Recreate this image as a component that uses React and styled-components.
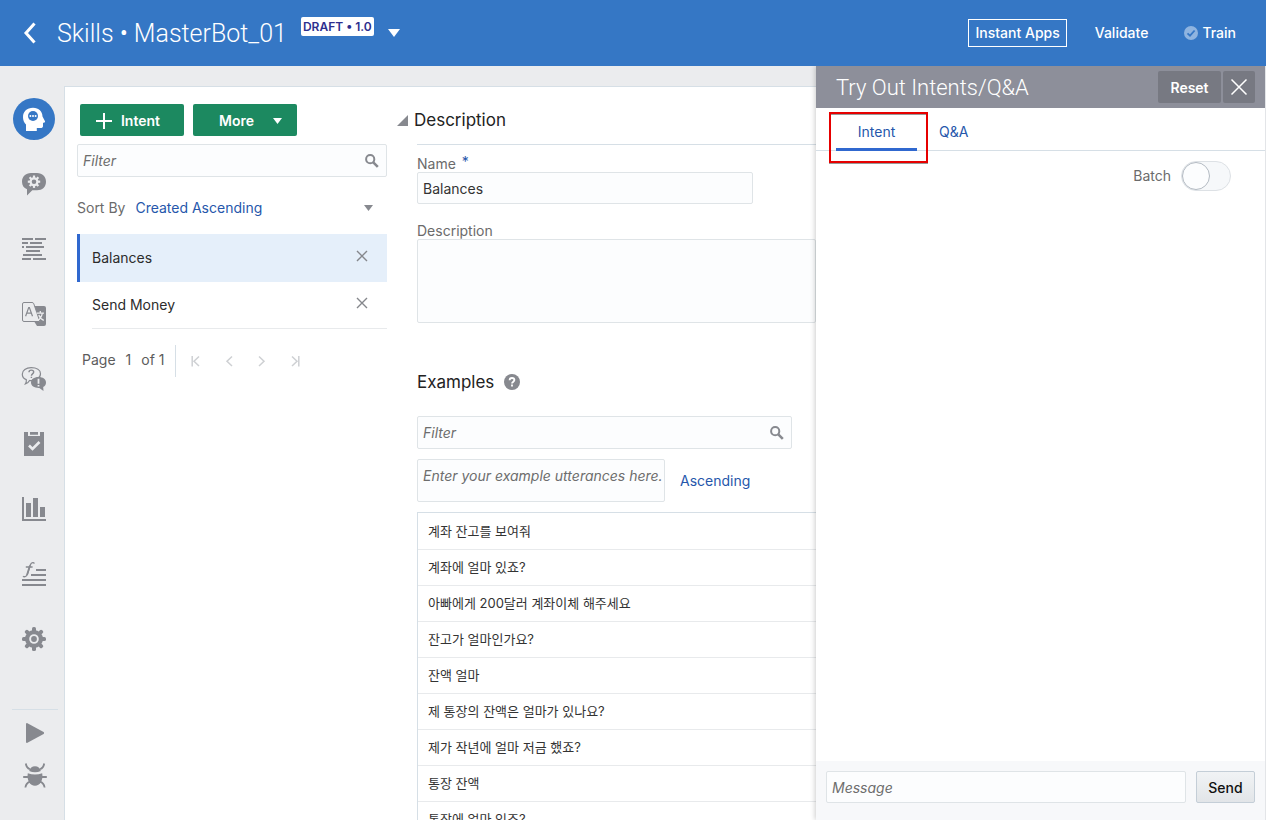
import React, { useState } from "react";
import styled, { createGlobalStyle, css } from "styled-components";

const GlobalStyle = createGlobalStyle`
  *, *::before, *::after { box-sizing: border-box; }
  body {
    margin: 0;
    background: #ebecee;
    color: #333;
    font: 400 14px/20px Inter, "Liberation Sans", "Noto Sans CJK KR", sans-serif;
  }
  button, input, select, textarea { font: inherit; color: inherit; margin: 0; }
  button { cursor: pointer; }
  h1, h2, ul, p { margin: 0; padding: 0; font-weight: inherit; }
  ul { list-style: none; }
  a { text-decoration: none; }
  svg { display: block; flex: none; }
`;

const ICON = "#87898f";
const LINK = "#2657ab";
const LINE = "#d6dfe6";
const DISPLAY = `Roboto, "Liberation Sans", sans-serif`;

const Page = styled.div`
  display: flex;
  flex-direction: column;
  height: 100vh;
  overflow: hidden;
`;

/* ---------- header ---------- */
const Header = styled.header`
  display: flex;
  align-items: center;
  flex: none;
  height: 66px;
  padding: 0 30px 0 22px;
  background: #3577c5;
  color: #fff;
`;
const BareButton = styled.button`
  display: flex;
  align-items: center;
  justify-content: center;
  padding: 0;
  border: 0;
  background: none;
`;
const Title = styled.h1`
  margin-left: 20px;
  padding-top: 2px;
  font-family: ${DISPLAY};
  font-size: 25px;
  line-height: 34px;
  font-weight: 300;
  white-space: nowrap;
`;
const VersionTag = styled.span`
  align-self: flex-start;
  margin: 17px 14px 0 14px;
  padding: 0 2px;
  border-radius: 2px;
  background: #fff;
  color: #2d2f8e;
  font-size: 12px;
  line-height: 19px;
  font-weight: 600;
  white-space: nowrap;
`;
const HeaderActions = styled.div`
  display: flex;
  align-items: center;
  margin-left: auto;
`;
const HeaderButton = styled.button`
  display: flex;
  align-items: center;
  gap: 4px;
  height: 28px;
  margin-left: ${(p) => p.$before || "0"};
  padding: 0 ${(p) => (p.$outlined ? "6px" : "0")};
  border: ${(p) => (p.$outlined ? "1px solid #fff" : "0")};
  background: none;
  font-weight: 500;
  white-space: nowrap;
`;

/* ---------- navigation rail ---------- */
const Body = styled.div`
  display: flex;
  flex: 1;
  min-height: 0;
`;
const Rail = styled.nav`
  flex: none;
  width: 64px;
  padding: 20px 6px 0 12px;
`;
const RailItem = styled.button`
  display: flex;
  align-items: center;
  justify-content: center;
  width: 44px;
  height: ${(p) => (p.$small ? "43px" : "65px")};
  padding: 0;
  border: 0;
  background: none;
  color: ${ICON};
`;
const ActiveDisc = styled.span`
  display: flex;
  align-items: center;
  justify-content: center;
  width: 42px;
  height: 42px;
  border-radius: 50%;
  background: #3577c5;
  color: #fff;
`;
const RailFooter = styled.div`
  margin-top: 38px;
  padding: 1px 0 0 1px;
  border-top: 1px solid ${LINE};
`;

/* ---------- shared parts ---------- */
const field = css`
  border: 1px solid #dfe4e7;
  border-radius: 2px;
  background: #fcfdfe;
  outline: none;
  &::placeholder { color: #6d6d6d; font-style: italic; opacity: 1; }
`;
const TextInput = styled.input`
  ${field}
  width: ${(p) => p.$width || "100%"};
  height: ${(p) => p.$height || "32px"};
  padding: 0 5px;
`;
const SearchField = styled.div`
  position: relative;
  width: ${(p) => p.$width};
  svg { position: absolute; right: 8px; top: 10px; color: ${ICON}; }
`;

/* ---------- workspace ---------- */
const Workspace = styled.main`
  display: flex;
  flex: 1;
  min-width: 0;
  margin-top: 20px;
  border: 1px solid ${LINE};
  border-width: 1px 0 0 1px;
  background: #fff;
  overflow: hidden;
`;
const IntentColumn = styled.section`
  flex: none;
  width: 322px;
  padding: 17px 0 0 12px;
`;
const ButtonRow = styled.div`
  display: flex;
  gap: 9px;
  padding: 0 0 8px 3px;
`;
const GreenButton = styled.button`
  display: flex;
  align-items: center;
  justify-content: space-between;
  width: 104px;
  height: 32px;
  padding: ${(p) => (p.$menu ? "1px 15px 0 26px" : "1px 24px 0 16px")};
  border: 0;
  border-radius: 2px;
  background: #1c8960;
  color: #fff;
  font-weight: 600;
`;
const SortRow = styled.div`
  display: flex;
  align-items: center;
  height: 57px;
  padding: 5px 14px 0 0;
  color: #6b6b6b;
`;
const SortSelect = styled.select`
  flex: 1;
  margin-left: 10px;
  padding: 0;
  border: 0;
  appearance: none;
  background: none;
  color: ${LINK};
`;
const IntentRow = styled.li`
  display: flex;
  align-items: center;
  justify-content: space-between;
  height: ${(p) => (p.$selected ? "48px" : "47px")};
  color: #2c2c2c;
  ${(p) =>
    p.$selected
      ? css`
          padding: 0 19px 0 12px;
          border-left: 3px solid #3068cf;
          background: #e5effa;
        `
      : css`
          margin-left: 15px;
          padding-right: 19px;
          border-bottom: 1px solid #e8eaec;
        `}
`;
const RemoveButton = styled(BareButton)`
  width: 12px;
  height: 12px;
  margin-bottom: 4px;
  color: #85878c;
`;
const Pager = styled.div`
  display: flex;
  align-items: center;
  margin-top: 16px;
  height: 32px;
  color: #5c5c5c;
`;
const PagerLabel = styled.p`
  display: flex;
  gap: 10px;
  align-items: center;
  height: 32px;
  padding: 0 11px 2px 5px;
  border-right: 1px solid ${LINE};
`;
const PagerNav = styled.div`
  display: flex;
  gap: 21px;
  padding-left: 14px;
  color: #ced0d3;
`;

const Detail = styled.section`
  flex: 1;
  min-width: 0;
  padding: 21px 0 0 30px;
  white-space: nowrap;
`;
const SectionToggle = styled.button`
  display: flex;
  align-items: center;
  gap: 6px;
  height: 24px;
  margin-left: -20px;
  padding: 0;
  border: 0;
  background: none;
`;
const Heading = styled.h2`
  font-size: 17px;
  line-height: 24px;
  color: #222;
`;
const FormBlock = styled.div`
  display: flex;
  flex-direction: column;
  margin-top: 12px;
  padding-top: 9px;
  border-top: 1px solid ${LINE};
`;
const Label = styled.label`
  display: flex;
  height: 18px;
  color: #6b6b6b;
  span { margin-left: 6px; color: ${LINK}; line-height: 16px; }
`;
const TextArea = styled.textarea`
  ${field}
  display: block;
  width: ${(p) => p.$width || "100%"};
  height: ${(p) => p.$height};
  padding: 6px 0 6px 5px;
  resize: none;
  overflow: hidden;
  &::placeholder { white-space: nowrap; }
`;
const Gap = styled.div`
  margin-top: ${(p) => p.$size};
`;
const ExamplesHead = styled.div`
  display: flex;
  align-items: center;
  gap: 10px;
  margin: 47px 0 22px;
`;
const UtteranceRow = styled.div`
  display: flex;
  align-items: center;
  gap: 15px;
  margin: 10px 0;
`;
const SortLink = styled.a`
  color: ${LINK};
`;
const ExampleList = styled.ul`
  padding-top: 1px;
  border: 1px solid ${LINE};
  border-width: 1px 0 0 1px;
`;
const ExampleRow = styled.li`
  height: 36px;
  padding: 0 10px;
  border-bottom: 1px solid #e8eaec;
  color: #333;
  font-size: 13px;
  line-height: 35px;
`;

/* ---------- try-out panel ---------- */
const Panel = styled.aside`
  display: flex;
  flex-direction: column;
  flex: none;
  width: 450px;
  border-right: 1px solid #e3e5e8;
  background: #fff;
  box-shadow: -1px 0 5px rgba(0, 0, 0, 0.2);
  clip-path: inset(0 0 0 -8px);
  z-index: 1;
`;
const PanelHead = styled.div`
  display: flex;
  align-items: center;
  gap: 2px;
  flex: none;
  height: 42px;
  padding: 0 10px 0 20px;
  background: #8d8f9a;
  color: #fff;
`;
const PanelTitle = styled.h2`
  flex: 1;
  padding-top: 2px;
  font-family: ${DISPLAY};
  font-size: 22px;
  line-height: 30px;
  font-weight: 300;
`;
const PanelButton = styled.button`
  display: flex;
  align-items: center;
  justify-content: center;
  width: ${(p) => p.$width};
  height: 32px;
  padding: ${(p) => (p.$icon ? "0" : "2px 0 0")};
  border: 0;
  border-radius: 2px;
  background: #777982;
  color: #fff;
  font-weight: 600;
`;
const Tabs = styled.div`
  position: relative;
  display: flex;
  flex: none;
  height: 43px;
  padding-left: 20px;
  border-bottom: 1px solid ${LINE};
`;
const Tab = styled.button`
  height: 43px;
  padding: 8px 22px 0;
  border: 0;
  border-bottom: 3px solid ${(p) => (p.$active ? "#3068cf" : "transparent")};
  background: none;
  color: ${LINK};
  ${(p) => p.$active && css`width: 81px; padding: 8px 0 0;`}
`;
const Callout = styled.div`
  position: absolute;
  left: 13px;
  top: 4px;
  width: 99px;
  height: 51px;
  border: 2px solid #e60000;
  box-shadow: 0 1px 0 rgba(0, 0, 0, 0.4), inset 0 1px 0 rgba(0, 0, 0, 0.4);
  pointer-events: none;
`;
const BatchRow = styled.label`
  display: flex;
  align-items: center;
  justify-content: flex-end;
  gap: 10px;
  padding: 10px 34px 0 0;
  color: #6b6b6b;
`;
const Switch = styled.input`
  appearance: none;
  display: flex;
  width: 50px;
  height: 30px;
  margin: 0;
  border: 1px solid #dde1e5;
  border-radius: 15px;
  background: #f6f8fa;
  &::before {
    content: "";
    width: 28px;
    height: 28px;
    border: 1px solid #b3bac2;
    border-radius: 50%;
    background: #fcfdfe;
  }
  &:checked { justify-content: flex-end; background: #3068cf; }
`;
const Composer = styled.form`
  display: flex;
  gap: 10px;
  flex: none;
  height: 59px;
  margin-top: auto;
  padding: 10px;
  background: #f7f8fa;
`;
const SendButton = styled.button`
  flex: none;
  width: 59px;
  height: 32px;
  padding: 2px 0 0;
  border: 1px solid #c4ced7;
  border-radius: 2px;
  background: linear-gradient(#f1f3f5, #e2e5e8);
  color: #111;
  font-weight: 500;
`;

/* ---------- icons ---------- */
const Triangle = ({ width = 10, height = 7, color = "currentColor" }) => (
  <svg width={width} height={height} viewBox="0 0 10 7" preserveAspectRatio="none">
    <path d="M0 0H10L5 7Z" fill={color} />
  </svg>
);
const Cross = ({ size = 12, weight = 1.4 }) => (
  <svg width={size} height={size} viewBox="0 0 12 12" fill="none" stroke="currentColor" strokeWidth={weight}>
    <path d="M1 1L11 11M11 1L1 11" />
  </svg>
);
const SearchIcon = () => (
  <svg width="14" height="14" viewBox="0 0 14 14" fill="none" stroke="currentColor">
    <circle cx="5.2" cy="5.2" r="4.1" strokeWidth="2" />
    <path d="M8.3 8.3L12.8 12.8" strokeWidth="2.6" />
  </svg>
);
const PagerIcon = ({ bar, flip }) => (
  <svg width="12" height="12" viewBox="0 0 12 12" fill="none" stroke="currentColor" strokeWidth="1.5">
    <g transform={flip ? "translate(12 0) scale(-1 1)" : undefined}>
      <path d="M9 1.5L4 6.2L9 11" />
      {bar && <path d="M2.2 1V11.5" />}
    </g>
  </svg>
);
const teeth = [0, 45, 90, 135, 180, 225, 270, 315];

const HeadIcon = () => (
  <svg width="24" height="24" viewBox="0 0 24 24">
    <path fill="currentColor" d="M4 23.5V17.5C2 15.5 1 13 1 10.2C1 4.5 5 .8 11 .8C17 .8 20.3 4.4 20.5 9.5L23 14.3C23.2 15 22.8 15.5 21.8 15.7H21V19C21 20.5 20 21 18.6 21H14.8V24H4Z" />
    <circle cx="11" cy="9" r="5" fill="#3577c5" />
    <g fill="#fff"><circle cx="8.4" cy="9" r="1" /><circle cx="11" cy="9" r="1" /><circle cx="13.6" cy="9" r="1" /></g>
  </svg>
);
const ChatGearIcon = () => (
  <svg width="24" height="24" viewBox="0 0 24 24">
    <path fill="currentColor" d="M9 1H15C20.5 1 24 4.5 24 9.7C24 14.8 20.5 18.2 15 18.2H10.3L5 23.6V17.3C1.8 16 0 13.3 0 9.7C0 4.5 3.5 1 9 1Z" />
    <g transform="translate(12 9.7)">
      {teeth.map((a) => (
        <rect key={a} x="-1.1" y="-6.2" width="2.2" height="3" fill="#ebecee" transform={`rotate(${a})`} />
      ))}
      <circle r="3.4" fill="none" stroke="#ebecee" strokeWidth="2.2" />
    </g>
  </svg>
);
const FlowIcon = () => (
  <svg width="24" height="24" viewBox="0 0 24 24" stroke="currentColor" strokeWidth="2">
    <path d="M0 2H11M13 2H24M0 6H6M8 6H20M0 10H2M4 10H22M4 14H18M1 18H20M0 22H9M11 22H24" />
  </svg>
);
const TranslateIcon = () => (
  <svg width="24" height="24" viewBox="0 0 24 24" fill="none" stroke="currentColor">
    <path d="M11.8 4H22Q24 4 24 6V22Q24 24 22 24H15L12.5 20H18.2Z" fill="currentColor" stroke="none" />
    <path d="M2 .5H10Q11.4 .5 11.8 1.8L17.8 19.5H2Q.5 19.5 .5 18V2Q.5 .5 2 .5Z" fill="#ebecee" />
    <path d="M3.6 14.2L6.7 5.6H7.4L10.5 14.2M4.7 11.2H9.4" strokeWidth="1.2" />
    <path d="M14.6 11.2H22M18.3 9V11.2M20.3 11.4C19.6 14.7 17.8 17.2 15.8 18.4M16.8 13C17.7 15.6 19.5 17.5 21.8 18.4" stroke="#ebecee" strokeWidth="1.3" />
  </svg>
);
const QuestionIcon = () => (
  <svg width="26" height="26" viewBox="0 0 26 26" fill="none" stroke="currentColor">
    <path d="M8.5 14.5C11 14.8 14 14.3 16.2 13C18.4 11.7 19.5 9.8 19.5 7.8C19.5 3.9 15.5 1.7 10.2 1.7C5 1.7 1.3 4.3 1.3 8.2C1.3 10.8 2.9 12.7 5.3 13.6C5.5 15.3 5.2 16.7 4.4 17.8C6.4 17.3 7.7 16.2 8.5 14.5Z" fill="#ebecee" strokeWidth="1.2" />
    <path d="M8 6.2C8 4.8 9 4.1 10.3 4.1C11.7 4.1 12.7 4.9 12.7 6.1C12.7 7.9 10.4 7.9 10.4 9.7M10.4 10.7V12" strokeWidth="1.4" />
    <path d="M17.5 11C22 11 25 13.2 25 16.5C25 18.6 24 20 22.2 21L22.5 25L18.3 22C13.5 22.2 10 20 10 16.6C10 13.2 13 11 17.5 11Z" fill="currentColor" stroke="none" />
    <path d="M17.5 12.8V17.8M17.5 19V20.6" stroke="#ebecee" strokeWidth="1.8" />
  </svg>
);
const ClipboardIcon = () => (
  <svg width="24" height="24" viewBox="0 0 24 24">
    <path fill="currentColor" d="M2 0H6V4H18V0H22V24H2ZM8 0H16V2.8H8Z" />
    <path d="M7 13.5L10.5 17L17.5 10" fill="none" stroke="#ebecee" strokeWidth="2.6" />
  </svg>
);
const ChartIcon = () => (
  <svg width="24" height="24" viewBox="0 0 24 24" fill="currentColor">
    <path d="M0 0H2V22H24V24H0ZM4 6H9V20H4ZM11 1H16V20H11ZM18 10H23V20H18Z" />
  </svg>
);
const FunctionIcon = () => (
  <svg width="24" height="24" viewBox="0 0 24 24" fill="none" stroke="currentColor">
    <path d="M14 8H24M9 13H24M0 18H24M0 23H24" strokeWidth="2" />
    <path d="M12.3 1.6C11.9 .3 9.5 .2 8.5 2.6C7.4 5.3 6.2 10.8 5 13C4 14.9 2 15.2 1 14.2M3.8 5H10.6" strokeWidth="1.3" />
    <path d="M8 3.5L5 13" strokeWidth="1.8" />
  </svg>
);
const GearIcon = () => (
  <svg width="24" height="24" viewBox="-12 -12 24 24" fill="currentColor">
    {teeth.map((a) => (
      <rect key={a} x="-2" y="-12" width="4" height="6" rx="1.6" transform={`rotate(${a})`} />
    ))}
    <circle r="6.9" fill="none" stroke="currentColor" strokeWidth="4.2" />
    <circle r="2.9" />
  </svg>
);
const PlayIcon = () => (
  <svg width="18" height="20" viewBox="0 0 18 20">
    <path d="M1 0L17.6 9Q18.6 10 17.6 11L1 20Q0 20 0 19V1Q0 0 1 0Z" fill="currentColor" />
  </svg>
);
const BugIcon = () => (
  <svg width="24" height="25" viewBox="0 0 24 25" fill="none" stroke="currentColor" strokeWidth="1.8">
    <path d="M6.2 8C7 4.9 9 3.2 12 3.2S17 4.9 17.8 8C14 9.6 10 9.6 6.2 8Z" fill="currentColor" stroke="none" />
    <path d="M4.8 10.3C9.5 12 14.5 12 19.2 10.3C20.4 17.5 17 22.7 12 22.7S3.6 17.5 4.8 10.3Z" fill="currentColor" stroke="none" />
    <path d="M2.8 .5C3.2 3.3 4.5 5.2 7 6.3M21.2 .5C20.8 3.3 19.5 5.2 17 6.3M.2 14H5M19 14H23.8M2.4 24.5C2.8 21.4 4.3 19.6 7 18.6M21.6 24.5C21.2 21.4 19.7 19.6 17 18.6" />
  </svg>
);

const navItems = [
  ["Intents", HeadIcon, true],
  ["Entities", ChatGearIcon],
  ["Flows", FlowIcon],
  ["Resource bundles", TranslateIcon],
  ["Q&A", QuestionIcon],
  ["Quality", ClipboardIcon],
  ["Insights", ChartIcon],
  ["Components", FunctionIcon],
  ["Settings", GearIcon],
];

const examples = [
  "계좌 잔고를 보여줘",
  "계좌에 얼마 있죠?",
  "아빠에게 200달러 계좌이체 해주세요",
  "잔고가 얼마인가요?",
  "잔액 얼마",
  "제 통장의 잔액은 얼마가 있나요?",
  "제가 작년에 얼마 저금 했죠?",
  "통장 잔액",
  "통장에 얼마 있죠?",
];

export default function App() {
  const [intent, setIntent] = useState("Balances");
  return (
    <>
      <GlobalStyle />
      <Page>
        <Header>
          <BareButton aria-label="Back">
            <svg width="15" height="22" viewBox="0 0 15 22" fill="none" stroke="#fff" strokeWidth="3">
              <path d="M12.5 1.5L4 11L12.5 20.5" />
            </svg>
          </BareButton>
          <Title>Skills • MasterBot_01</Title>
          <VersionTag>DRAFT • 1.0</VersionTag>
          <BareButton aria-label="Versions">
            <Triangle width={12} height={8} />
          </BareButton>
          <HeaderActions>
            <HeaderButton $outlined>Instant Apps</HeaderButton>
            <HeaderButton $before="28px">Validate</HeaderButton>
            <HeaderButton $before="36px">
              <svg width="14" height="14" viewBox="0 0 14 14">
                <circle cx="7" cy="7" r="7" fill="#8fb4e0" />
                <path d="M3.5 7.3L6 9.7L10.6 4.5" fill="none" stroke="#3577c5" strokeWidth="1.8" />
              </svg>
              Train
            </HeaderButton>
          </HeaderActions>
        </Header>

        <Body>
          <Rail>
            {navItems.map(([name, Icon, active]) => (
              <RailItem key={name} aria-label={name}>
                {active ? <ActiveDisc><Icon /></ActiveDisc> : <Icon />}
              </RailItem>
            ))}
            <RailFooter>
              <RailItem $small aria-label="Run"><PlayIcon /></RailItem>
              <RailItem $small aria-label="Debug"><BugIcon /></RailItem>
            </RailFooter>
          </Rail>

          <Workspace>
            <IntentColumn>
              <ButtonRow>
                <GreenButton>
                  <svg width="16" height="16" viewBox="0 0 16 16" stroke="#fff" strokeWidth="2">
                    <path d="M8 0V16M0 8H16" />
                  </svg>
                  Intent
                </GreenButton>
                <GreenButton $menu>
                  More
                  <Triangle width={9} height={6} />
                </GreenButton>
              </ButtonRow>
              <SearchField $width="100%">
                <TextInput $height="33px" placeholder="Filter" aria-label="Filter intents" />
                <SearchIcon />
              </SearchField>
              <SortRow>
                <label htmlFor="sort">Sort By</label>
                <SortSelect id="sort">
                  <option>Created Ascending</option>
                </SortSelect>
                <Triangle width={9} height={6} color={ICON} />
              </SortRow>
              <ul>
                {["Balances", "Send Money"].map((name, i) => (
                  <IntentRow key={name} $selected={i === 0}>
                    {name}
                    <RemoveButton aria-label={`Remove ${name}`}><Cross /></RemoveButton>
                  </IntentRow>
                ))}
              </ul>
              <Pager>
                <PagerLabel>
                  <span>Page</span>
                  <span>1</span>
                  <span>of 1</span>
                </PagerLabel>
                <PagerNav>
                  <BareButton aria-label="First page"><PagerIcon bar /></BareButton>
                  <BareButton aria-label="Previous page"><PagerIcon /></BareButton>
                  <BareButton aria-label="Next page"><PagerIcon flip /></BareButton>
                  <BareButton aria-label="Last page"><PagerIcon bar flip /></BareButton>
                </PagerNav>
              </Pager>
            </IntentColumn>

            <Detail>
              <SectionToggle>
                <svg width="11" height="11" viewBox="0 0 11 11"><path d="M11 0V11H0Z" fill={ICON} /></svg>
                <Heading>Description</Heading>
              </SectionToggle>
              <FormBlock>
                <Label htmlFor="name">Name <span>*</span></Label>
                <TextInput id="name" $width="336px" value={intent} onChange={(e) => setIntent(e.target.value)} />
                <Gap $size="17px">
                  <Label htmlFor="description">Description</Label>
                  <TextArea id="description" $height="84px" />
                </Gap>
              </FormBlock>
              <ExamplesHead>
                <Heading>Examples</Heading>
                <svg width="16" height="16" viewBox="0 0 16 16" fill="none">
                  <circle cx="8" cy="8" r="8" fill={ICON} />
                  <path d="M5.6 6.3C5.6 4.7 6.6 4 8 4S10.4 4.8 10.4 6.1C10.4 7.7 8 7.7 8 9.6M8 10.6V12.4" stroke="#fff" strokeWidth="1.8" />
                </svg>
              </ExamplesHead>
              <SearchField $width="375px">
                <TextInput $height="33px" placeholder="Filter" aria-label="Filter examples" />
                <SearchIcon />
              </SearchField>
              <UtteranceRow>
                <TextArea $width="248px" $height="43px" placeholder="Enter your example utterances here." aria-label="Example utterance" />
                <SortLink href="#ascending">Ascending</SortLink>
              </UtteranceRow>
              <ExampleList>
                {examples.map((text) => <ExampleRow key={text}>{text}</ExampleRow>)}
              </ExampleList>
            </Detail>
          </Workspace>

          <Panel>
            <PanelHead>
              <PanelTitle>Try Out Intents/Q&amp;A</PanelTitle>
              <PanelButton $width="63px">Reset</PanelButton>
              <PanelButton $width="32px" $icon aria-label="Close"><Cross size={18} weight={1} /></PanelButton>
            </PanelHead>
            <Tabs>
              <Tab $active>Intent</Tab>
              <Tab>Q&amp;A</Tab>
              <Callout />
            </Tabs>
            <BatchRow>
              Batch
              <Switch type="checkbox" role="switch" />
            </BatchRow>
            <Composer onSubmit={(e) => e.preventDefault()}>
              <TextInput placeholder="Message" aria-label="Message" />
              <SendButton>Send</SendButton>
            </Composer>
          </Panel>
        </Body>
      </Page>
    </>
  );
}
